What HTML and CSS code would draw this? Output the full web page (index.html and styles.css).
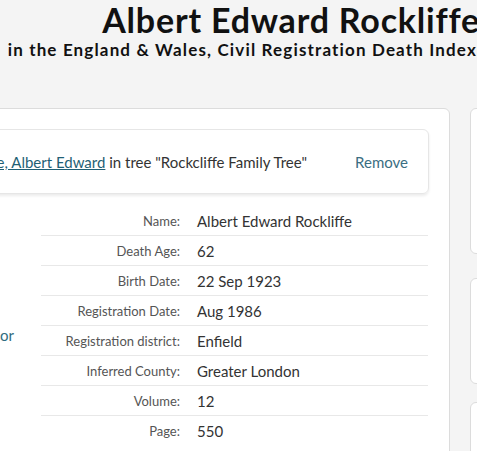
FILE: index.html
```html
<!DOCTYPE html>
<html>
<head>
<meta charset="utf-8">
<link rel="stylesheet" href="styles.css">
</head>
<body>
<header class="header">
  <h1 class="title">Albert Edward Rockliffe</h1>
  <div class="subtitle">in the England &amp; Wales, Civil Registration Death Index</div>
</header>
<div class="layout">
  <section class="main-card">
    <div class="tree-box">
      <div class="tree-text">Attached to <a class="link" href="#">Rockcliffe, Albert Edward</a> in tree "Rockcliffe Family Tree"</div>
      <a class="remove" href="#">Remove</a>
    </div>
    <div class="body">
      <div class="left-col">
        <div class="left-spacer"></div>
        <a class="left-link" href="#">Suggest a correction or</a>
      </div>
      <div class="table">
        <div class="row"><div class="label">Name:</div><div class="value">Albert Edward Rockliffe</div></div>
        <div class="row"><div class="label">Death Age:</div><div class="value">62</div></div>
        <div class="row"><div class="label">Birth Date:</div><div class="value">22 Sep 1923</div></div>
        <div class="row"><div class="label">Registration Date:</div><div class="value">Aug 1986</div></div>
        <div class="row"><div class="label">Registration district:</div><div class="value">Enfield</div></div>
        <div class="row"><div class="label">Inferred County:</div><div class="value">Greater London</div></div>
        <div class="row"><div class="label">Volume:</div><div class="value">12</div></div>
        <div class="row last"><div class="label">Page:</div><div class="value">550</div></div>
      </div>
    </div>
  </section>
  <aside class="side">
    <div class="side-card c1"></div>
    <div class="side-card c2"></div>
    <div class="side-card c3"></div>
  </aside>
</div>
</body>
</html>
```
FILE: styles.css
```css
html, body {
  margin: 0;
  padding: 0;
}
body {
  background: #f4f4f4;
  font-family: Lato, "Liberation Sans", sans-serif;
  color: #333;
  overflow: hidden;
  width: 477px;
  height: 451px;
}
.header {
  text-align: right;
  margin-right: -3px;
  padding-top: 0;
}
.title {
  margin: 0;
  font-size: 34px;
  line-height: 40px;
  font-weight: 700;
  letter-spacing: 0.8px;
  color: #111;
  white-space: nowrap;
}
.subtitle {
  font-size: 17px;
  line-height: 20px;
  font-weight: 700;
  letter-spacing: 1.15px;
  color: #111;
  white-space: nowrap;
  margin-right: 3px;
}
.layout {
  display: flex;
  gap: 20px;
  margin-left: -200px;
  margin-top: 48px;
}
.main-card {
  flex: none;
  width: 650px;
  box-sizing: border-box;
  background: #fff;
  border: 1px solid #dcdcdc;
  border-radius: 6px;
  padding: 20px 20px 40px 20px;
  height: 420px;
}
.tree-box {
  display: flex;
  align-items: center;
  justify-content: space-between;
  height: 65px;
  box-sizing: border-box;
  border: 1px solid #e6e6e6;
  border-radius: 6px;
  box-shadow: 0 2px 3px rgba(0,0,0,0.08);
  padding: 0 20px 0 0;
  font-size: 15px;
  white-space: nowrap;
}
.tree-text {
  margin-left: 38px;
}
.link {
  color: #1f5f75;
  text-decoration: underline;
}
.remove {
  color: #3a6e82;
  text-decoration: none;
}
.body {
  display: flex;
  margin-top: 12px;
}
.left-col {
  flex: none;
  width: 220px;
  display: flex;
  flex-direction: column;
  align-items: flex-end;
  padding-right: 27px;
  box-sizing: border-box;
}
.left-spacer {
  height: 120px;
}
.left-link {
  color: #2f6b80;
  text-decoration: none;
  font-size: 15px;
  white-space: nowrap;
}
.table {
  width: 387px;
}
.row {
  display: flex;
  align-items: center;
  height: 30px;
  box-sizing: border-box;
  border-bottom: 1px solid #e8e8e8;
}
.row.last {
  border-bottom: none;
}
.label {
  width: 139px;
  text-align: right;
  font-size: 13px;
  color: #555;
  white-space: nowrap;
}
.value {
  margin-left: 17px;
  font-size: 15px;
  color: #333;
  white-space: nowrap;
}
.side {
  display: flex;
  flex-direction: column;
  flex: none;
  width: 200px;
}
.side-card {
  background: #fff;
  border: 1px solid #dcdcdc;
  border-radius: 6px;
  box-sizing: border-box;
}
.c1 { height: 146px; }
.c2 { height: 106px; margin-top: 24px; }
.c3 { height: 100px; margin-top: 18px; }
```
